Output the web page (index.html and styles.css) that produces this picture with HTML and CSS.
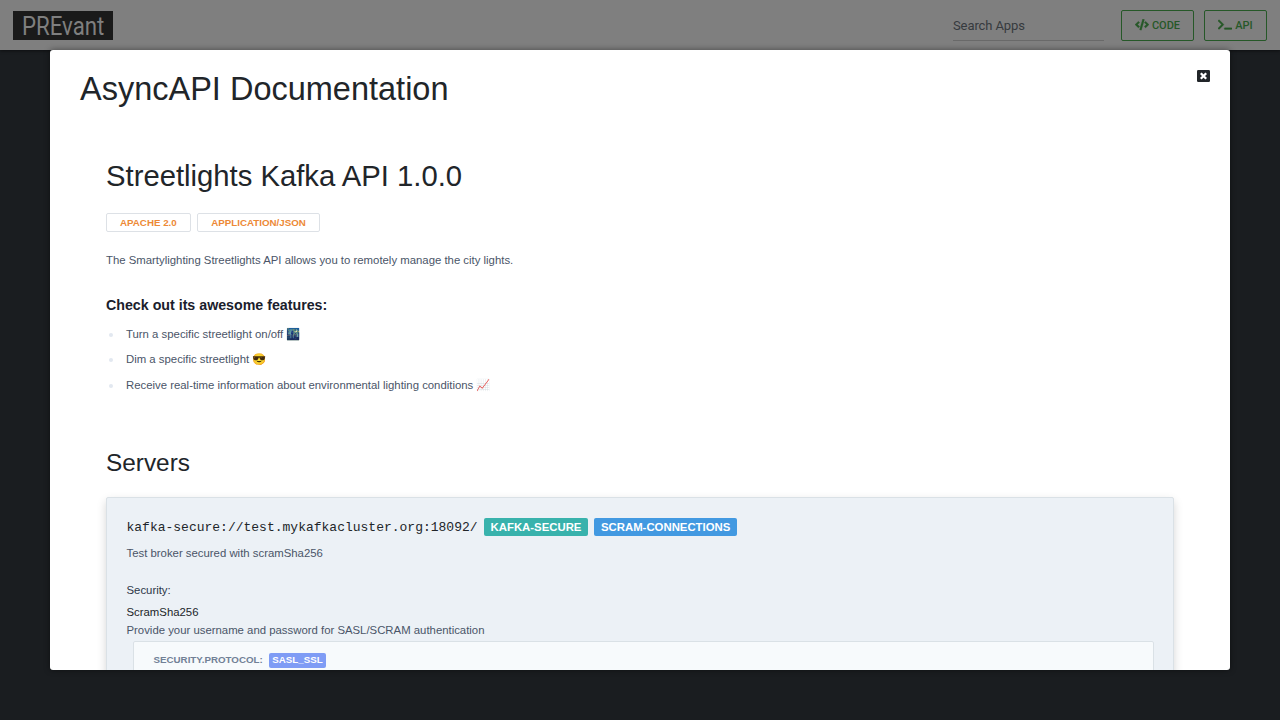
FILE: index.html
```html
<!DOCTYPE html>
<html lang="en">
<head>
<meta charset="utf-8">
<title>PREvant</title>
<link rel="stylesheet" href="styles.css">
</head>
<body>
<header class="navbar">
  <div class="logo"><span class="logo-text">PREvant</span></div>
  <div class="nav-tools">
    <div class="search">Search Apps</div>
    <button class="nav-btn nav-btn-code">
      <svg class="icon-code" viewBox="0 0 640 512"><path fill="currentColor" d="M278.900 511.500l-61-17.700c-6.400-1.800-10-8.500-8.200-14.900L346.200 8.700c1.800-6.400 8.500-10 14.900-8.200l61 17.700c6.400 1.800 10 8.500 8.200 14.900L293.800 503.300c-1.900 6.400-8.500 10.100-14.900 8.200zm-114-112.200l43.500-46.400c4.600-4.900 4.300-12.700-.8-17.200L117 256l90.600-79.700c5.100-4.500 5.500-12.300.8-17.200l-43.500-46.400c-4.500-4.800-12.100-5.100-17-.5L3.800 247.200c-5.100 4.700-5.100 12.800 0 17.500l144.100 135.100c4.900 4.600 12.500 4.400 17-.5zm327.200.6l144.100-135.100c5.100-4.700 5.100-12.800 0-17.500L492.100 112.100c-4.800-4.500-12.400-4.300-17 .5L431.600 159c-4.600 4.900-4.300 12.700.8 17.200L523 256l-90.600 79.700c-5.100 4.500-5.500 12.300-.8 17.200l43.500 46.400c4.500 4.900 12.100 5.100 17 .6z"/></svg>
      <span>CODE</span>
    </button>
    <button class="nav-btn nav-btn-api">
      <svg class="icon-code" viewBox="0 0 640 512"><path fill="currentColor" d="M257.981 272.971L63.638 467.314c-9.373 9.373-24.569 9.373-33.941 0L7.029 444.647c-9.357-9.357-9.375-24.522-.04-33.901L161.011 256 6.990 101.255c-9.335-9.379-9.317-24.544.04-33.901l22.667-22.667c9.373-9.373 24.569-9.373 33.941 0L257.981 239.030c9.373 9.372 9.373 24.568 0 33.941zM640 456v-32c0-13.255-10.745-24-24-24H312c-13.255 0-24 10.745-24 24v32c0 13.255 10.745 24 24 24h304c13.255 0 24-10.745 24-24z"/></svg>
      <span>API</span>
    </button>
  </div>
</header>
<main class="modal">
  <div class="modal-head">
    <h1 class="modal-title">AsyncAPI Documentation</h1>
    <svg class="close" viewBox="0 0 13 12"><rect width="13" height="12" rx="1.2" fill="#212529"/><path d="M3.800 3.300L9.200 8.700M9.200 3.300L3.800 8.700" stroke="#fff" stroke-width="2.300"/></svg>
  </div>
  <div class="doc">
    <h2 class="api-title">Streetlights Kafka API 1.0.0</h2>
    <div class="tags"><span class="tag">APACHE 2.0</span><span class="tag">APPLICATION/JSON</span></div>
    <p class="text intro">The Smartylighting Streetlights API allows you to remotely manage the city lights.</p>
    <h3 class="features-title">Check out its awesome features:</h3>
    <ul class="features">
      <li class="feature"><span>Turn a specific streetlight on/off <span class="emoji">🌃</span></span></li>
      <li class="feature"><span>Dim a specific streetlight <span class="emoji">😎</span></span></li>
      <li class="feature"><span>Receive real-time information about environmental lighting conditions <span class="emoji">📈</span></span></li>
    </ul>
    <h2 class="section-title">Servers</h2>
    <section class="card">
      <div class="server-line">
        <span class="url">kafka-secure://test.mykafkacluster.org:18092/</span>
        <span class="badge teal">KAFKA-SECURE</span>
        <span class="badge blue">SCRAM-CONNECTIONS</span>
      </div>
      <p class="text broker">Test broker secured with scramSha256</p>
      <p class="text security">Security:</p>
      <p class="text scheme">ScramSha256</p>
      <p class="text provide">Provide your username and password for SASL/SCRAM authentication</p>
      <div class="protocol-box">
        <span class="protocol">SECURITY.PROTOCOL:</span>
        <span class="protocol-badge">SASL_SSL</span>
      </div>
    </section>
  </div>
</main>
</body>
</html>
```
FILE: styles.css
```css
* { box-sizing: border-box; }
body {
  margin: 0;
  height: 720px;
  overflow: hidden;
  background: #1a1d20;
  color: #212529;
  font: 13px/1.5 "Liberation Sans", Arial, sans-serif;
}
h1, h2, h3, p, ul { margin: 0; padding: 0; font-weight: 400; }
.navbar {
  height: 50px;
  padding: 10px 13px;
  display: flex;
  justify-content: space-between;
  background: #7f7f7f;
  box-shadow: 0 1px 3px rgba(0, 0, 0, .5);
  font-family: Roboto, sans-serif;
}
.logo {
  width: 100px;
  height: 29px;
  margin-top: 1px;
  padding-left: 9px;
  background: #1a1a1a;
  color: #7f7f7f;
  overflow: hidden;
}
.logo-text {
  display: block;
  width: max-content;
  font-size: 25px;
  line-height: 32px;
  transform: scaleX(.89);
  transform-origin: left;
}
.nav-tools { display: flex; }
.search {
  width: 151px;
  height: 31px;
  margin-right: 17px;
  border-bottom: 1px solid #696969;
  color: #363a3e;
  font-size: 13px;
  letter-spacing: -.1px;
  line-height: 31px;
}
.nav-btn {
  height: 31px;
  padding: 0;
  display: flex;
  align-items: center;
  justify-content: center;
  gap: 3px;
  background: transparent;
  border: 1px solid #265828;
  border-radius: 2px;
  color: #265828;
  font: 500 11px/29px Roboto, sans-serif;
}
.nav-btn-code { width: 73px; margin-right: 10px; }
.nav-btn-api { width: 63px; }
.icon-code { width: 14px; height: 11.2px; margin-bottom: 1px; stroke: currentColor; stroke-width: 12; }
.modal {
  width: 1180px;
  height: 620px;
  margin: 0 auto;
  padding: 20px 20px 0 30px;
  position: relative;
  overflow: hidden;
  background: #fff;
  border-radius: 3px;
  box-shadow: 0 0 6px rgba(0, 0, 0, .45);
}
.modal-head { display: flex; justify-content: space-between; height: 88px; }
.modal-title { font-size: 32.5px; line-height: 39px; }
.close { width: 13px; height: 12px; margin-top: .4px; }
.doc { padding: 0 36px 0 26px; }
.api-title { font-size: 29.25px; line-height: 36px; }
.tags { display: flex; gap: 6.500px; margin-top: 19px; }
.tag {
  height: 19px;
  padding: 0 13px;
  border: 1px solid #dde1e6;
  border-radius: 2px;
  color: #ed8936;
  font-size: 9.75px;
  font-weight: 700;
  line-height: 18px;
}
.text { font-size: 11.375px; line-height: 18px; color: #4a5568; }
.intro { margin-top: 19px; }
.features-title { margin-top: 26px; font-size: 14.22px; line-height: 20px; font-weight: 700; color: #1a202c; }
.features { margin-top: 6px; list-style: none; }
.feature {
  display: flex;
  align-items: center;
  height: 25.5px;
  color: #4a5568;
  font-size: 11.375px;
  line-height: 20px;
}
.feature::before {
  content: "";
  width: 4px;
  height: 4px;
  margin: 2px 13px 0 3px;
  border-radius: 50%;
  background: #e2e8f0;
}
.emoji { display: inline-block; transform: rotate(.02deg); }
.section-title { margin-top: 49px; font-size: 24.375px; line-height: 32px; }
.card {
  height: 260px;
  margin-top: 18px;
  padding: 20px 19px 0 19.5px;
  background: #ecf1f6;
  border: 1px solid #dae1e6;
  border-radius: 2px;
  box-shadow: 0 4px 10px rgba(0, 0, 0, .17);
}
.server-line { display: flex; }
.url { margin-right: 6.500px; font: 13px/19px "Liberation Mono", monospace; height: 18px; }
.badge {
  height: 18px;
  margin-right: 6.500px;
  padding: 0 6.500px;
  border-radius: 2px;
  color: #fff;
  font-size: 11.375px;
  font-weight: 700;
  line-height: 18px;
}
.teal { background: #38b2ac; }
.blue { background: #4299e1; }
.broker { margin-top: 8px; }
.security { margin-top: 19px; color: #2d3748; }
.scheme { margin-top: 4px; color: #212529; }
.provide { margin-top: 0; }
.protocol-box {
  height: 80px;
  margin: 2px 0 0 6.500px;
  padding: 11px 19.5px;
  display: flex;
  align-items: flex-start;
  background: #f7fafc;
  border: 1px solid #dae1e6;
  border-radius: 2px;
}
.protocol, .protocol-badge { font-size: 9.75px; font-weight: 700; line-height: 15px; }
.protocol { color: #718096; line-height: 14px; }
.protocol-badge { margin-left: 6.250px; padding: 0 3.250px; border-radius: 2px; background: #7f9cf5; color: #fff; line-height: 14px; height: 15px; }
```
